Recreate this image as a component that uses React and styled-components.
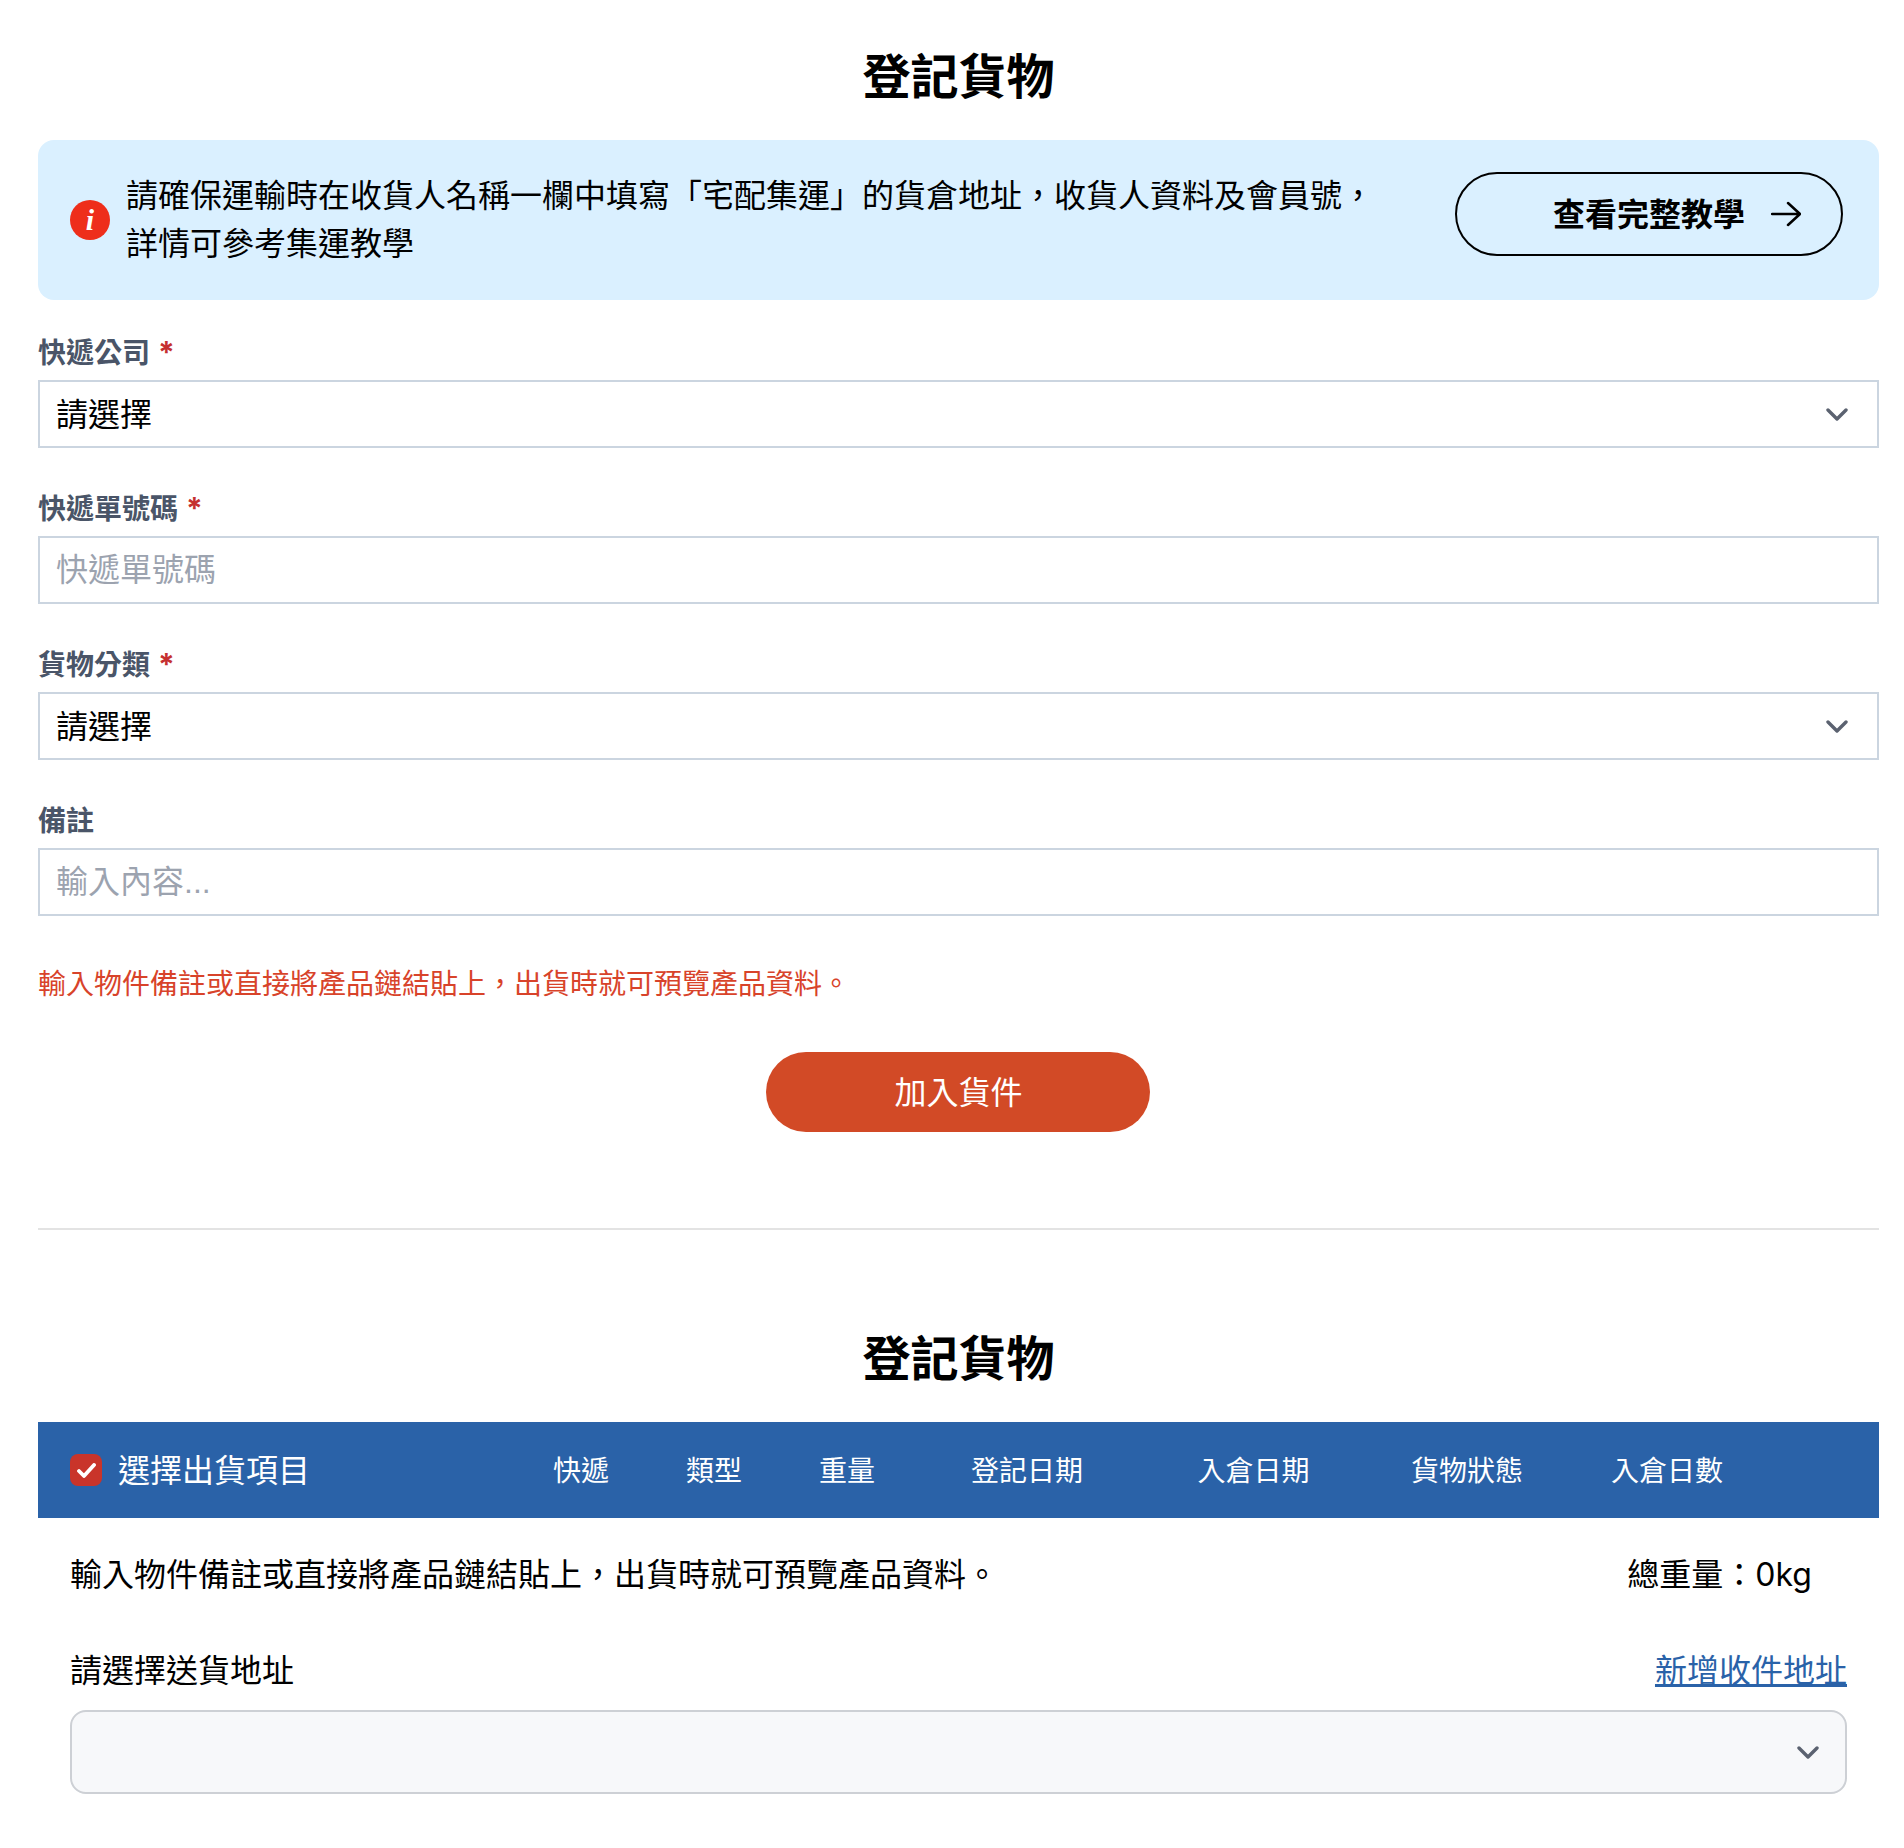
import styled, { createGlobalStyle } from "styled-components";

const GlobalStyle = createGlobalStyle`
  * { box-sizing: border-box; }
  body {
    margin: 0;
    background: #fff;
    color: #000;
    font-family: Inter, "Noto Sans CJK TC", sans-serif;
  }
`;

const Page = styled.div`
  min-height: 1848px;
  padding: 40px 25px 0 38px;
`;

const Title = styled.h1`
  margin: 0 0 27px;
  padding-top: 1px;
  font-size: 48px;
  line-height: 72px;
  font-weight: 700;
  text-align: center;
`;

const Banner = styled.div`
  display: flex;
  justify-content: space-between;
  align-items: flex-start;
  height: 160px;
  padding: 32px 36px 32px 32px;
  background: #daf0ff;
  border-radius: 16px;
`;

const BannerInfo = styled.div`
  display: flex;
  align-items: center;
  gap: 16px;
`;

const InfoBadge = styled.span`
  flex: none;
  width: 40px;
  height: 40px;
  border-radius: 50%;
  background: #ee2e1b;
  color: #fff;
  display: flex;
  align-items: center;
  justify-content: center;
  font-family: "Liberation Serif", serif;
  font-style: italic;
  font-weight: 700;
  font-size: 30px;
  line-height: 40px;
`;

const BannerText = styled.p`
  margin: 0;
  font-size: 32px;
  line-height: 48px;
`;

const TutorialButton = styled.button`
  width: 388px;
  height: 84px;
  padding: 0 40px 0 0;
  display: flex;
  align-items: center;
  justify-content: flex-end;
  gap: 26px;
  background: transparent;
  border: 2px solid #000;
  border-radius: 42px;
  color: #000;
  font: inherit;
  font-size: 32px;
  font-weight: 700;
`;

const ButtonLabel = styled.span`
  margin-bottom: 5px;
`;

const Form = styled.form`
  margin-top: 32px;
  display: flex;
  flex-direction: column;
  gap: 40px;
`;

const Field = styled.div`
  display: flex;
  flex-direction: column;
  gap: 8px;
`;

const Label = styled.label`
  height: 40px;
  padding-top: 1px;
  font-size: 28px;
  line-height: 40px;
  font-weight: 700;
  color: #4a5568;
`;

const Star = styled.span`
  margin-left: 8px;
  font-size: 30px;
  line-height: 0;
  color: #c53030;
`;

const SelectBox = styled.div`
  height: 68px;
  padding: 0 29px 0 16px;
  display: flex;
  align-items: center;
  justify-content: space-between;
  border: 2px solid #cbd5e0;
  font-size: 32px;
`;

const SelectValue = styled.span`
  margin-bottom: 4px;
`;

const TextInput = styled.input`
  height: 68px;
  width: 100%;
  padding: 0 16px;
  border: 2px solid #cbd5e0;
  border-radius: 0;
  outline: none;
  font-family: "Liberation Sans", "Noto Sans CJK TC", sans-serif;
  font-size: 32px;
  &::placeholder { color: #9ca3af; opacity: 1; }
`;

const Hint = styled.p`
  margin: 47px 0 0;
  font-size: 28px;
  line-height: 42px;
  color: #d8432a;
`;

const SubmitRow = styled.div`
  display: flex;
  justify-content: center;
  margin-top: 47px;
`;

const SubmitButton = styled.button`
  width: 384px;
  height: 80px;
  margin-right: 1px;
  padding: 0 0 4px 1px;
  border: 0;
  border-radius: 40px;
  background: #d24a26;
  color: #fff;
  font: inherit;
  font-size: 32px;
`;

const Divider = styled.hr`
  margin: 96px 0 92px;
  border: 0;
  border-top: 2px solid #e3e3e3;
`;

const TableHead = styled.div`
  height: 96px;
  padding-left: 32px;
  display: grid;
  grid-template-columns: 445px 132px 134px 132px 228px 225px 202px 198px;
  align-items: center;
  background: #2a62a8;
  color: #fff;
`;

const SelectAll = styled.div`
  display: flex;
  align-items: center;
  gap: 16px;
  font-size: 32px;
`;

const SelectAllLabel = styled.span`
  margin-bottom: 4px;
`;

const CheckMark = styled.span`
  width: 32px;
  height: 32px;
  border-radius: 8px;
  background: #c9342a;
  display: flex;
  align-items: center;
  justify-content: center;
`;

const HeadCell = styled.div`
  padding-bottom: 3px;
  text-align: center;
  font-size: 28px;
`;

const Summary = styled.div`
  padding: 32px 32px 0;
`;

const SummaryRow = styled.div`
  display: flex;
  align-items: center;
  justify-content: space-between;
  height: 48px;
  padding-bottom: ${(p) => p.$lift || 4}px;
  font-size: 32px;
  margin-top: ${(p) => p.$top || 0}px;
  padding-right: ${(p) => p.$right || 0}px;
`;

const AddLink = styled.a`
  color: #2a62a8;
  text-decoration: underline;
`;

const AddressSelect = styled.div`
  margin-top: 16px;
  height: 84px;
  padding-right: 26px;
  display: flex;
  align-items: center;
  justify-content: flex-end;
  background: #f7f8fa;
  border: 2px solid #cdd0d5;
  border-radius: 16px;
`;

const Chevron = () => (
  <svg width="22" height="13" viewBox="0 0 22 13" fill="none" stroke="#5b6270" strokeWidth="3.4" strokeLinecap="round" strokeLinejoin="round">
    <path d="M2 2l9 9 9-9" />
  </svg>
);

const Arrow = () => (
  <svg width="30" height="26" viewBox="0 0 30 26" fill="none" stroke="#000" strokeWidth="2.5" strokeLinecap="round" strokeLinejoin="round">
    <path d="M1 13h28M17 2l12 11-12 11" />
  </svg>
);

const Check = () => (
  <svg width="19" height="15" viewBox="0 0 19 15" fill="none" stroke="#fff" strokeWidth="3.8" strokeLinecap="round" strokeLinejoin="round">
    <path d="M2 8l5 5L17 2" />
  </svg>
);

const columns = ["快遞", "類型", "重量", "登記日期", "入倉日期", "貨物狀態", "入倉日數"];

export default function App() {
  return (
    <Page>
      <GlobalStyle />
      <Title>登記貨物</Title>
      <Banner>
        <BannerInfo>
          <InfoBadge>i</InfoBadge>
          <BannerText>
            請確保運輸時在收貨人名稱一欄中填寫「宅配集運」的貨倉地址，收貨人資料及會員號，
            <br />
            詳情可參考集運教學
          </BannerText>
        </BannerInfo>
        <TutorialButton type="button">
          <ButtonLabel>查看完整教學</ButtonLabel>
          <Arrow />
        </TutorialButton>
      </Banner>

      <Form>
        <Field>
          <Label>快遞公司<Star>*</Star></Label>
          <SelectBox><SelectValue>請選擇</SelectValue><Chevron /></SelectBox>
        </Field>
        <Field>
          <Label>快遞單號碼<Star>*</Star></Label>
          <TextInput placeholder="快遞單號碼" />
        </Field>
        <Field>
          <Label>貨物分類<Star>*</Star></Label>
          <SelectBox><SelectValue>請選擇</SelectValue><Chevron /></SelectBox>
        </Field>
        <Field>
          <Label>備註</Label>
          <TextInput placeholder="輸入內容..." />
        </Field>
      </Form>

      <Hint>輸入物件備註或直接將產品鏈結貼上，出貨時就可預覽產品資料。</Hint>
      <SubmitRow>
        <SubmitButton type="button">加入貨件</SubmitButton>
      </SubmitRow>

      <Divider />

      <Title>登記貨物</Title>
      <TableHead>
        <SelectAll>
          <CheckMark><Check /></CheckMark>
          <SelectAllLabel>選擇出貨項目</SelectAllLabel>
        </SelectAll>
        {columns.map((c) => (
          <HeadCell key={c}>{c}</HeadCell>
        ))}
      </TableHead>

      <Summary>
        <SummaryRow $right={35} $lift={5}>
          <span>輸入物件備註或直接將產品鏈結貼上，出貨時就可預覽產品資料。</span>
          <span>總重量：0kg</span>
        </SummaryRow>
        <SummaryRow $top={48}>
          <span>請選擇送貨地址</span>
          <AddLink href="#">新增收件地址</AddLink>
        </SummaryRow>
        <AddressSelect><Chevron /></AddressSelect>
      </Summary>
    </Page>
  );
}
